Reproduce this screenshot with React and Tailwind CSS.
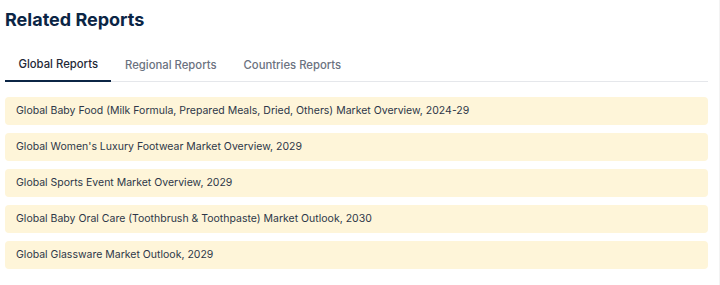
const reports = [
	'Global Baby Food (Milk Formula, Prepared Meals, Dried, Others) Market Overview, 2024-29',
	"Global Women's Luxury Footwear Market Overview, 2029",
	'Global Sports Event Market Overview, 2029',
	'Global Baby Oral Care (Toothbrush & Toothpaste) Market Outlook, 2030',
	'Global Glassware Market Outlook, 2029',
]

const tabs = ['Global Reports', 'Regional Reports', 'Countries Reports']

export default function App() {
	return (
		<div className="h-[285px] w-[720px] border-r border-[#f3f3f3] bg-white font-['Inter',sans-serif]">
			<div className="w-[708px] pl-[5px] pt-[8px]">
				<h2 className="text-[18px] leading-[24px] font-bold text-[#0b2545]">Related Reports</h2>

				<div className="mt-[22px] flex border-b border-[#e5e7eb]">
					{tabs.map((t, i) => (
						<button
							key={t}
							className={
								i === 0
									? '-mb-px border-b-2 border-[#0b2545] px-[13.5px] pt-[2px] pb-[7px] text-[11.3px] font-medium text-[#1f2937]'
									: 'px-[13.5px] pt-[2px] pb-[7px] text-[11.3px] font-medium text-[#6b7280]'
							}
						>
							{t}
						</button>
					))}
				</div>

				<div className="mt-[15px] flex flex-col gap-[8px]">
					{reports.map((r) => (
						<div key={r} className="flex h-[28px] items-center rounded-[4px] bg-[#fef5d9] px-[11px] text-[10.5px] text-[#2d3748]">
							{r}
						</div>
					))}
				</div>
			</div>
		</div>
	)
}
